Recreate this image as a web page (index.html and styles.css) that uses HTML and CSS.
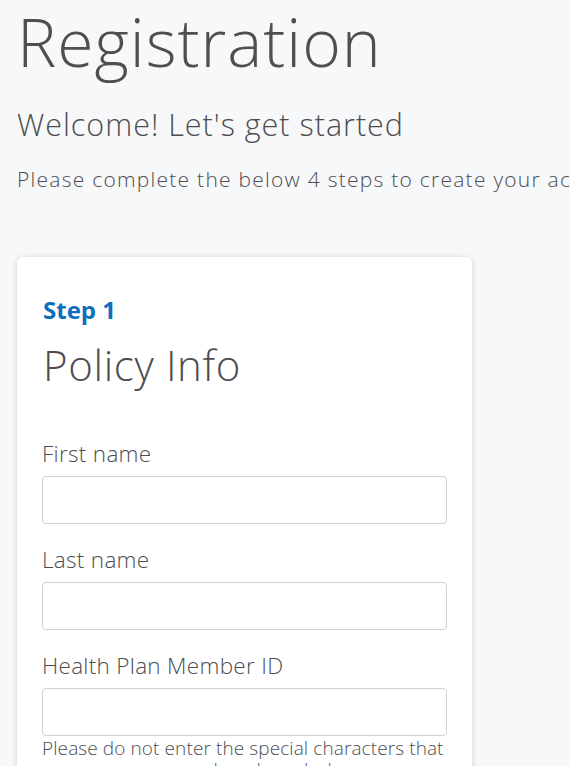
FILE: index.html
```html
<!DOCTYPE html>
<html lang="en">
<head>
<meta charset="utf-8">
<title>Registration</title>
<link rel="stylesheet" href="styles.css">
</head>
<body>
<main class="page">
  <h1 class="title">Registration</h1>
  <h2 class="subtitle">Welcome! Let's get started</h2>
  <p class="intro">Please complete the below 4 steps to create your account.</p>

  <section class="card">
    <div class="step">Step 1</div>
    <h3 class="card-title">Policy Info</h3>

    <div class="field">
      <label class="label" for="first">First name</label>
      <input class="input" id="first" type="text">
    </div>
    <div class="field">
      <label class="label" for="last">Last name</label>
      <input class="input" id="last" type="text">
    </div>
    <div class="field">
      <label class="label" for="member">Health Plan Member ID</label>
      <input class="input" id="member" type="text">
      <p class="help">Please do not enter the special characters that appear on your card, such as dashes or spaces.</p>
    </div>
  </section>
</main>
</body>
</html>
```

FILE: styles.css
```css
html, body {
  margin: 0;
  padding: 0;
  background: #f7f8fa;
}

body {
  font-family: "Open Sans", "Liberation Sans", sans-serif;
  font-weight: 300;
  color: #4d4d4f;
  overflow: hidden;
}

.page {
  padding: 0 0 0 17px;
  overflow: hidden;
}

.title {
  margin: 0;
  font-size: 66px;
  font-weight: 300;
  letter-spacing: 1px;
  line-height: 82px;
  color: #4f4f51;
}

.subtitle {
  margin: 24px 0 0;
  font-size: 30.5px;
  font-weight: 300;
  letter-spacing: 1px;
  line-height: 36px;
}

.intro {
  margin: 24px 0 0;
  font-size: 21px;
  letter-spacing: 1.25px;
  line-height: 26px;
  white-space: nowrap;
}

.card {
  margin-top: 65px;
  width: 455px;
  box-sizing: border-box;
  padding: 40px 25px 40px;
  background: #fff;
  border-radius: 6px;
  box-shadow: 0 1px 6px rgba(0, 0, 0, 0.16);
}

.step {
  font-size: 24px;
  font-weight: 700;
  line-height: 26px;
  color: #0b6fbd;
  padding-left: 1px;
}

.card-title {
  margin: 17px 0 0;
  font-size: 42px;
  font-weight: 300;
  letter-spacing: 0.65px;
  line-height: 50px;
  padding-left: 1px;
}

.field {
  margin-top: 22px;
}

.card-title + .field {
  margin-top: 50px;
}

.label {
  display: block;
  font-size: 22.5px;
  letter-spacing: 0.3px;
  line-height: 28px;
}

.input {
  display: block;
  margin-top: 8px;
  width: 100%;
  height: 48px;
  box-sizing: border-box;
  border: 1px solid #ccd1d9;
  border-radius: 4px;
  background: #fff;
}

.help {
  margin: 1px 0 0;
  font-size: 19px;
  letter-spacing: 0.1px;
  line-height: 22px;
}
```
